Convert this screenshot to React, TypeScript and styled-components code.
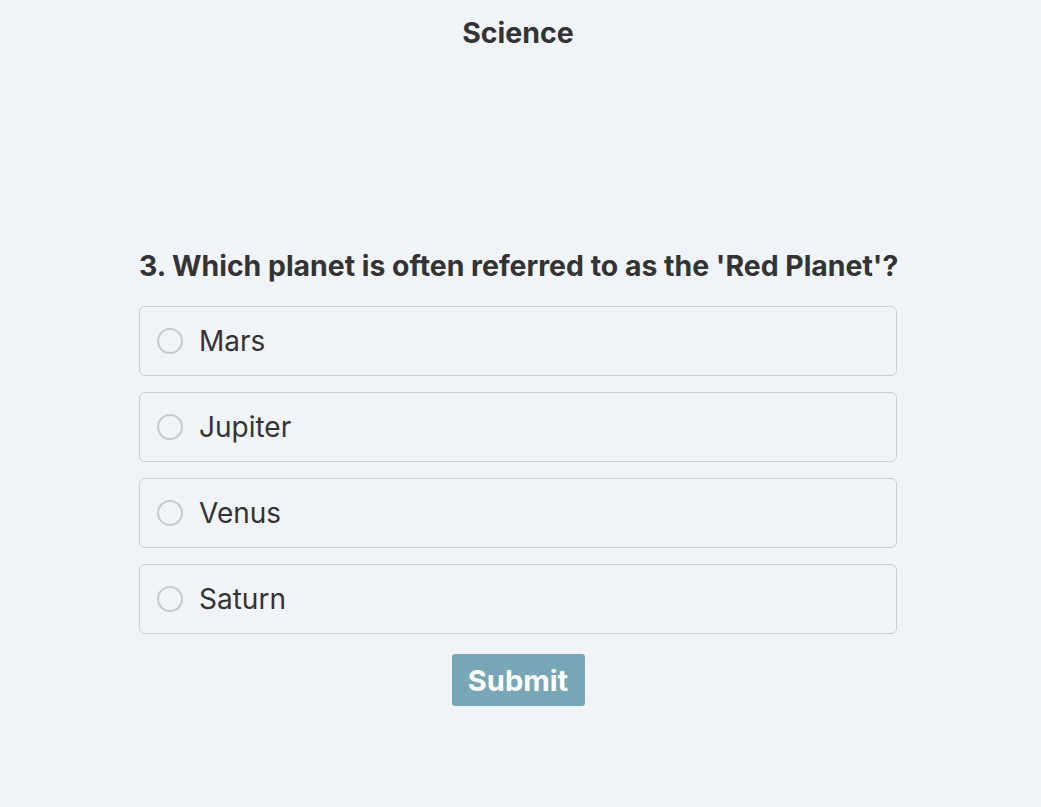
import React, { useState } from "react";
import styled, { createGlobalStyle } from "styled-components";

const Global = createGlobalStyle`
  html, body { margin: 0; padding: 0; background: #f0f3f8; }
  body { font-family: Inter, "Noto Sans", sans-serif; color: #333; }
`;

const Page = styled.div`
  display: flex;
  flex-direction: column;
  align-items: center;
  padding: 14px 5px 0 0;
  min-height: 807px;
  box-sizing: border-box;
`;

const Title = styled.h1`
  margin: 0;
  font-size: 28.5px;
  font-weight: 700;
  line-height: 38px;
  color: #333;
`;

const Quiz = styled.div`
  width: 758px;
  margin-top: 196px;
  display: flex;
  flex-direction: column;
  gap: 16px;
`;

const Question = styled.h2`
  margin: 0 0 6px;
  font-size: 28.4px;
  font-weight: 700;
  line-height: 36px;
  color: #333;
  white-space: nowrap;
`;

const Option = styled.label`
  display: flex;
  align-items: center;
  gap: 16px;
  height: 70px;
  box-sizing: border-box;
  padding: 0 17px;
  border: 1px solid #cdcdcd;
  border-radius: 6px;
  cursor: pointer;
  font-size: 28px;
  color: #333;
`;

const Radio = styled.span<{ $on: boolean }>`
  width: 26px;
  height: 26px;
  box-sizing: border-box;
  border-radius: 50%;
  border: 2px solid ${(p) => (p.$on ? "#77a6b6" : "#c9c9c9")};
  background: ${(p) => (p.$on ? "radial-gradient(#77a6b6 40%, transparent 45%)" : "transparent")};
  flex: none;
`;

const Actions = styled.div`
  display: flex;
  justify-content: center;
  margin-top: 4px;
`;

const Submit = styled.button`
  width: 133px;
  height: 52px;
  border: none;
  border-radius: 3px;
  background: #77a6b6;
  color: #fff;
  font-family: Inter, "Noto Sans", sans-serif;
  font-size: 29px;
  font-weight: 700;
  cursor: pointer;
`;

const options = ["Mars", "Jupiter", "Venus", "Saturn"];

export default function App() {
  const [sel, setSel] = useState<number | null>(null);
  return (
    <>
      <Global />
      <Page>
        <Title>Science</Title>
        <Quiz>
          <Question>3. Which planet is often referred to as the 'Red Planet'?</Question>
          {options.map((o, i) => (
            <Option key={o} onClick={() => setSel(i)}>
              <Radio $on={sel === i} />
              {o}
            </Option>
          ))}
          <Actions>
            <Submit>Submit</Submit>
          </Actions>
        </Quiz>
      </Page>
    </>
  );
}
